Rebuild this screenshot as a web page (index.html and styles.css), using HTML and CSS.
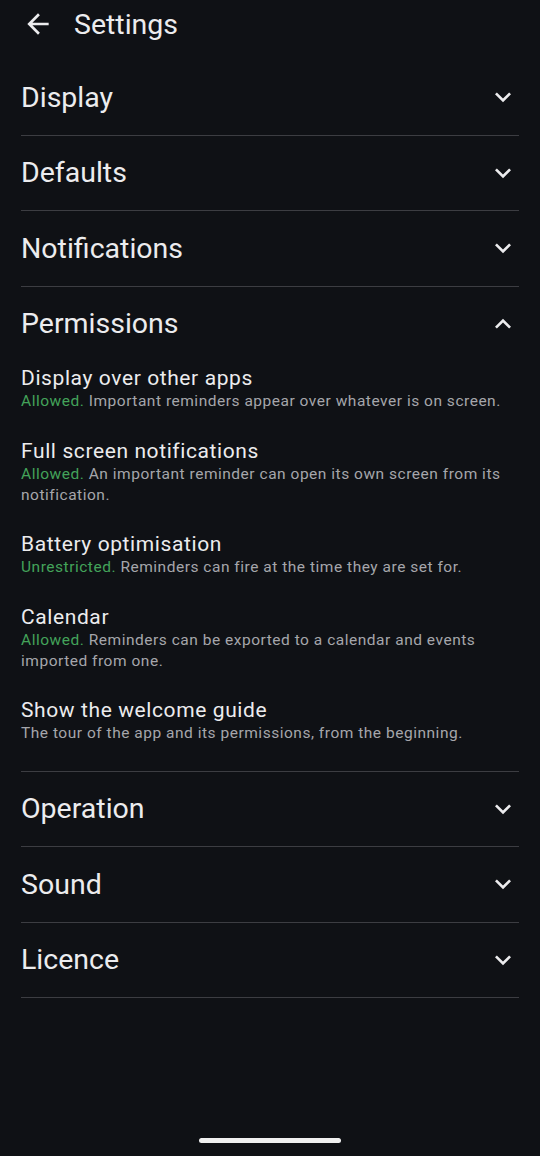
FILE: index.html
```html
<!DOCTYPE html>
<html lang="en">
<head>
    <meta charset="UTF-8">
    <meta name="viewport" content="width=device-width, initial-scale=1.0">
    <title>Settings</title>
    <link rel="stylesheet" href="styles.css">
</head>
<body>
    <header class="topbar">
        <button class="back" aria-label="Back">
            <svg viewBox="0 0 24 24" width="32" height="32"><path d="M20 11H7.83l5.59-5.59L12 4l-8 8 8 8 1.41-1.41L7.83 13H20v-2z"/></svg>
        </button>
        <h1 class="title">Settings</h1>
    </header>

    <main class="sections">
        <section class="section">
            <div class="section-head">
                <h2>Display</h2>
                <svg class="chevron" viewBox="0 0 24 24"><path d="M16.59 8.59L12 13.17 7.41 8.59 6 10l6 6 6-6z"/></svg>
            </div>
        </section>
        <section class="section">
            <div class="section-head">
                <h2>Defaults</h2>
                <svg class="chevron" viewBox="0 0 24 24"><path d="M16.59 8.59L12 13.17 7.41 8.59 6 10l6 6 6-6z"/></svg>
            </div>
        </section>
        <section class="section">
            <div class="section-head">
                <h2>Notifications</h2>
                <svg class="chevron" viewBox="0 0 24 24"><path d="M16.59 8.59L12 13.17 7.41 8.59 6 10l6 6 6-6z"/></svg>
            </div>
        </section>
        <section class="section open">
            <div class="section-head">
                <h2>Permissions</h2>
                <svg class="chevron" viewBox="0 0 24 24"><path d="M7.41 15.41L12 10.83l4.59 4.58L18 14l-6-6-6 6z"/></svg>
            </div>
            <div class="items">
                <div class="item">
                    <div class="item-title">Display over other apps</div>
                    <div class="item-sub"><span class="ok">Allowed.</span> Important reminders appear over whatever is on screen.</div>
                </div>
                <div class="item">
                    <div class="item-title">Full screen notifications</div>
                    <div class="item-sub"><span class="ok">Allowed.</span> An important reminder can open its own screen from its notification.</div>
                </div>
                <div class="item">
                    <div class="item-title">Battery optimisation</div>
                    <div class="item-sub"><span class="ok">Unrestricted.</span> Reminders can fire at the time they are set for.</div>
                </div>
                <div class="item">
                    <div class="item-title">Calendar</div>
                    <div class="item-sub"><span class="ok">Allowed.</span> Reminders can be exported to a calendar and events imported from one.</div>
                </div>
                <div class="item">
                    <div class="item-title">Show the welcome guide</div>
                    <div class="item-sub">The tour of the app and its permissions, from the beginning.</div>
                </div>
            </div>
        </section>
        <section class="section">
            <div class="section-head">
                <h2>Operation</h2>
                <svg class="chevron" viewBox="0 0 24 24"><path d="M16.59 8.59L12 13.17 7.41 8.59 6 10l6 6 6-6z"/></svg>
            </div>
        </section>
        <section class="section">
            <div class="section-head">
                <h2>Sound</h2>
                <svg class="chevron" viewBox="0 0 24 24"><path d="M16.59 8.59L12 13.17 7.41 8.59 6 10l6 6 6-6z"/></svg>
            </div>
        </section>
        <section class="section">
            <div class="section-head">
                <h2>Licence</h2>
                <svg class="chevron" viewBox="0 0 24 24"><path d="M16.59 8.59L12 13.17 7.41 8.59 6 10l6 6 6-6z"/></svg>
            </div>
        </section>
    </main>

    <div class="gesture-bar"></div>
</body>
</html>
```

FILE: styles.css
```css
* {
    box-sizing: border-box;
    margin: 0;
    padding: 0;
}

body {
    position: relative;
    width: 540px;
    height: 1156px;
    overflow: hidden;
    background: #0f1115;
    color: #e8e8ea;
    font-family: Roboto, "Noto Sans", sans-serif;
}

.topbar {
    display: flex;
    align-items: center;
    height: 48px;
    padding-left: 22px;
    margin-bottom: 12px;
}

.back {
    display: flex;
    background: none;
    border: none;
    width: 32px;
    height: 32px;
}

.back svg {
    fill: #ececee;
}

.title {
    margin-left: 20px;
    font-size: 28.5px;
    font-weight: 400;
    color: #ececee;
}

.sections {
    padding: 0 21px;
}

.section {
    border-bottom: 1px solid #3c3d42;
}

.section-head {
    display: flex;
    align-items: center;
    justify-content: space-between;
    height: 74.5px;
}

.section-head h2 {
    font-size: 28.5px;
    font-weight: 400;
    color: #ececee;
}

.chevron {
    width: 32px;
    height: 32px;
    fill: #ececee;
}

.items {
    display: flex;
    flex-direction: column;
    gap: 26.5px;
    padding: 5px 0 26.5px;
}

.item-title {
    font-size: 21px;
    line-height: 25px;
    letter-spacing: 0.6px;
    color: #ececee;
}

.item-sub {
    font-size: 15.5px;
    line-height: 21px;
    letter-spacing: 0.52px;
    color: #a5a6ab;
}

.ok {
    color: #43a35a;
}

.gesture-bar {
    position: absolute;
    left: 199px;
    top: 1138px;
    width: 142px;
    height: 5px;
    border-radius: 3px;
    background: #f0f0f0;
}
```
